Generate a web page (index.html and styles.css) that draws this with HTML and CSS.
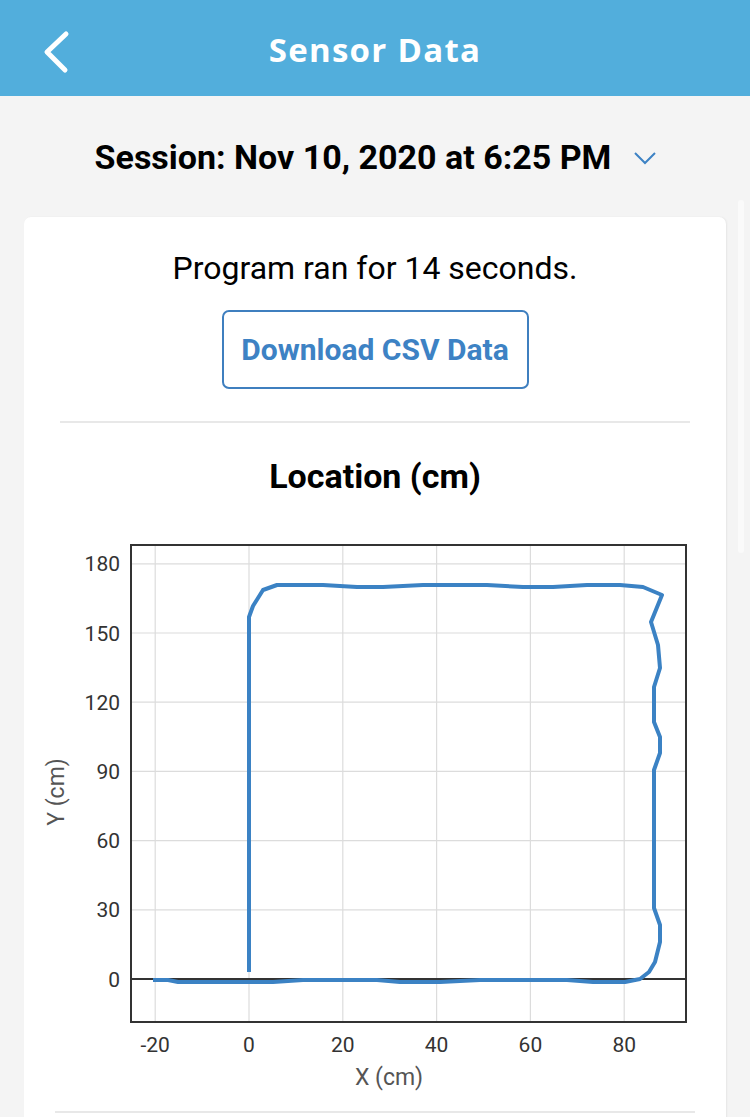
FILE: index.html
```html
<!DOCTYPE html>
<html>
<head>
<meta charset="utf-8">
<link rel="stylesheet" href="styles.css">
</head>
<body>
<div class="page">
  <header class="topbar">
    <svg class="back" width="40" height="50" viewBox="0 0 40 50"><path d="M26 6 L7 24 L25 42" fill="none" stroke="#fff" stroke-width="5" stroke-linecap="round" stroke-linejoin="round"/></svg>
    <h1 class="title">Sensor Data</h1>
  </header>
  <div class="session">
    <span class="session-text">Session: Nov 10, 2020 at 6:25 PM</span>
    <svg class="caret" width="24" height="14" viewBox="0 0 24 14"><path d="M2 2 L12 12 L22 2" fill="none" stroke="#3d82c4" stroke-width="2"/></svg>
  </div>
  <section class="card">
    <p class="runtime">Program ran for 14 seconds.</p>
    <button class="download">Download CSV Data</button>
    <hr class="divider">
    <h2 class="chart-title">Location (cm)</h2>
    <svg class="chart" width="702" height="570" viewBox="24 530 702 570">
      <g stroke="#dcdcdc" stroke-width="1.2">
        <line x1="155.2" y1="545" x2="155.2" y2="1022"/>
        <line x1="249" y1="545" x2="249" y2="1022"/>
        <line x1="342.8" y1="545" x2="342.8" y2="1022"/>
        <line x1="436.6" y1="545" x2="436.6" y2="1022"/>
        <line x1="530.4" y1="545" x2="530.4" y2="1022"/>
        <line x1="624.2" y1="545" x2="624.2" y2="1022"/>
        <line x1="131" y1="563.8" x2="686" y2="563.8"/>
        <line x1="131" y1="633" x2="686" y2="633"/>
        <line x1="131" y1="702.2" x2="686" y2="702.2"/>
        <line x1="131" y1="771.4" x2="686" y2="771.4"/>
        <line x1="131" y1="840.6" x2="686" y2="840.6"/>
        <line x1="131" y1="909.8" x2="686" y2="909.8"/>
      </g>
      <line x1="131" y1="979" x2="686" y2="979" stroke="#333" stroke-width="2"/>
      <rect x="131" y="545" width="555" height="477" fill="none" stroke="#333" stroke-width="2"/>
      <path d="M249,972 L249,617 L253,606 L263,590 L277,585 L323,585 L357,587 L383,587 L423,585 L487,585 L523,587 L553,587 L587,585 L620,585 L643,587 L662,595 L651,622 L658,645 L660,668 L654,687 L654,722 L660,737 L660,753 L654,770 L654,908 L660,925 L660,942 L655,962 L649,972 L640,979 L625,982 L593,982 L567,980 L480,980 L440,982 L400,982 L377,980 L303,980 L273,982 L178,982 L168,980 L153,980" fill="none" stroke="#3b82c4" stroke-width="4" stroke-linejoin="round" stroke-linecap="butt"/>
      <g class="ytick" text-anchor="end">
        <text x="120" y="571.3">180</text>
        <text x="120" y="640.5">150</text>
        <text x="120" y="709.7">120</text>
        <text x="120" y="778.9">90</text>
        <text x="120" y="848.1">60</text>
        <text x="120" y="917.3">30</text>
        <text x="120" y="986.5">0</text>
      </g>
      <g class="xtick" text-anchor="middle">
        <text x="155.2" y="1052">-20</text>
        <text x="249" y="1052">0</text>
        <text x="342.8" y="1052">20</text>
        <text x="436.6" y="1052">40</text>
        <text x="530.4" y="1052">60</text>
        <text x="624.2" y="1052">80</text>
      </g>
      <text class="axis-label" x="389" y="1085" text-anchor="middle">X (cm)</text>
      <text class="axis-label" x="0" y="0" text-anchor="middle" transform="translate(64 792) rotate(-90)">Y (cm)</text>
    </svg>
    <hr class="divider bottom">
  </section>
  <div class="scroll-thumb"></div>
</div>
</body>
</html>
```
FILE: styles.css
```css
* { box-sizing: border-box; }
html, body { margin: 0; padding: 0; }
body {
  background: #f4f4f4;
  font-family: Roboto, "Liberation Sans", sans-serif;
  color: #000;
}
.page {
  position: relative;
  width: 750px;
  height: 1117px;
  overflow: hidden;
}
.topbar {
  height: 96px;
  background: #52aedc;
  display: flex;
  align-items: center;
  justify-content: center;
  position: relative;
}
.back {
  position: absolute;
  left: 40px;
  top: 28px;
}
.title {
  margin: 4px 0 0;
  color: #fff;
  font-family: "Open Sans", sans-serif;
  font-weight: 700;
  font-size: 33px;
  letter-spacing: 1.3px;
  line-height: 40px;
}
.session {
  height: 121px;
  display: flex;
  align-items: center;
  justify-content: center;
  gap: 22px;
  padding-left: 2px;
}
.session-text {
  font-weight: 700;
  font-size: 34px;
  line-height: 40px;
}
.caret { margin-top: 2px; }
.card {
  margin: 0 24px;
  background: #fff;
  border-radius: 7px;
  box-shadow: 1px 0 2px rgba(0,0,0,0.06);
  display: flex;
  flex-direction: column;
  align-items: center;
  padding-top: 31px;
  min-height: 920px;
}
.runtime {
  margin: 0;
  font-size: 32px;
  line-height: 40px;
}
.download {
  margin-top: 22px;
  width: 307px;
  height: 79px;
  background: #fff;
  border: 2px solid #3f7fbf;
  border-radius: 7px;
  color: #3d82c4;
  font-family: Roboto, "Liberation Sans", sans-serif;
  font-weight: 700;
  font-size: 30px;
  padding: 0;
}
.divider {
  margin: 32px 0 0;
  width: 630px;
  border: 0;
  height: 2px;
  background: #e8e8e8;
}
.chart-title {
  margin: 33px 0 0;
  font-size: 34px;
  font-weight: 700;
  line-height: 40px;
}
.chart {
  display: block;
  margin-top: 34px;
}
.ytick text, .xtick text {
  font-family: Roboto, sans-serif;
  font-size: 21px;
  fill: #333;
}
.axis-label {
  font-family: Roboto, sans-serif;
  font-size: 23px;
  fill: #555;
}
.divider.bottom {
  margin-top: 11px;
  width: 640px;
}
.scroll-thumb {
  position: absolute;
  left: 738px;
  top: 200px;
  width: 6px;
  height: 353px;
  border-radius: 3px;
  background: #fafafa;
}
```
